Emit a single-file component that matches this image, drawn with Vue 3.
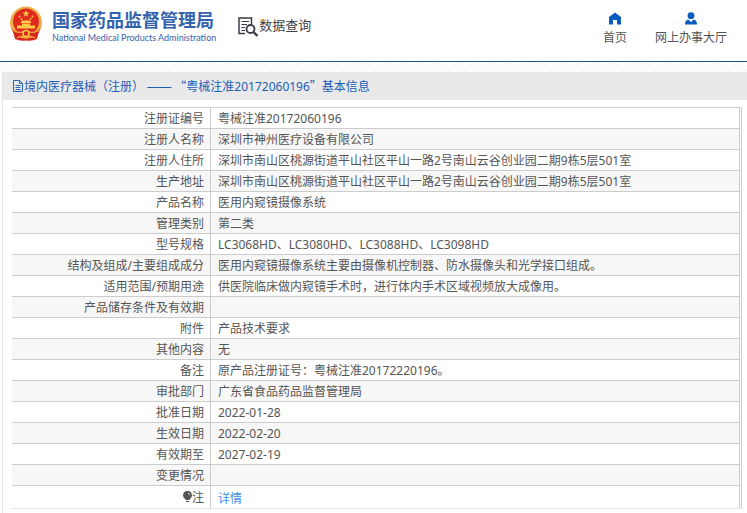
<script setup>
const rows = [
  ['注册证编号', '粤械注准20172060196'],
  ['注册人名称', '深圳市神州医疗设备有限公司'],
  ['注册人住所', '深圳市南山区桃源街道平山社区平山一路2号南山云谷创业园二期9栋5层501室'],
  ['生产地址', '深圳市南山区桃源街道平山社区平山一路2号南山云谷创业园二期9栋5层501室'],
  ['产品名称', '医用内窥镜摄像系统'],
  ['管理类别', '第二类'],
  ['型号规格', 'LC3068HD、LC3080HD、LC3088HD、LC3098HD'],
  ['结构及组成/主要组成成分', '医用内窥镜摄像系统主要由摄像机控制器、防水摄像头和光学接口组成。'],
  ['适用范围/预期用途', '供医院临床做内窥镜手术时，进行体内手术区域视频放大成像用。'],
  ['产品储存条件及有效期', ''],
  ['附件', '产品技术要求'],
  ['其他内容', '无'],
  ['备注', '原产品注册证号：粤械注准20172220196。'],
  ['审批部门', '广东省食品药品监督管理局'],
  ['批准日期', '2022-01-28'],
  ['生效日期', '2022-02-20'],
  ['有效期至', '2027-02-19'],
  ['变更情况', ''],
]
</script>

<template>
  <div class="page">
    <header class="top">
      <a class="brand" href="#">
        <svg class="emblem" viewBox="0 0 34 36" aria-hidden="true">
          <path d="M5 24 H29 L28 33 Q23 35.500 17 34.500 Q11 35.500 6 33 Z" fill="#d7261e" />
          <circle cx="17" cy="16.500" r="16" fill="#eeb04a" />
          <circle cx="17" cy="15.500" r="13" fill="#de2a1c" />
          <path d="M17 4 L17.900 6.600 L20.600 6.600 L18.400 8.200 L19.200 10.800 L17 9.200 L14.800 10.800 L15.600 8.200 L13.400 6.600 L16.100 6.600 Z" fill="#ffc84a" />
          <g fill="#ffc84a">
            <circle cx="10.500" cy="10.500" r=".9" /><circle cx="12.500" cy="13" r=".9" />
            <circle cx="21.500" cy="13" r=".9" /><circle cx="23.500" cy="10.500" r=".9" />
            <path d="M13 14.500 H21 L22.500 17 H11.500 Z M13 17.500 H21 V19.500 H26 V22.500 H8 V19.500 H13 Z" />
          </g>
          <path d="M3 23 Q10 27 17 24 Q24 27 31 23 L28 32 Q22 29 17 32 Q12 29 6 32 Z" fill="#d7261e" />
          <path d="M4 24 Q10 28 14 25.500 M30 24 Q24 28 20 25.500 M8 32 Q13 28.500 17 32 Q21 28.500 26 32" fill="none" stroke="#f2b33a" stroke-width="1.200" />
          <circle cx="17" cy="27.500" r="3" fill="#d7261e" stroke="#ffc84a" stroke-width="1.600" />
        </svg>
        <span class="names">
          <span class="cn">国家药品监督管理局</span>
          <span class="en">National Medical Products Administration</span>
        </span>
      </a>
      <a class="search" href="#">
        <svg class="search-icon" viewBox="0 0 21 20" fill="none" stroke="#3b3b46" aria-hidden="true">
          <path d="M7 16.500 H1 V1 H13.500 V7" stroke-width="1.500" />
          <path d="M3.500 4.500 H11 M3.500 7.500 H9 M3.500 10.500 H7 M3.500 13.500 H7" stroke-width="1.200" />
          <circle cx="12.500" cy="12" r="4" stroke-width="1.800" />
          <path d="M15.500 15 L19.500 19" stroke-width="2.400" />
        </svg>
        <span>数据查询</span>
      </a>
      <nav class="nav">
        <a href="#">
          <svg viewBox="0 0 14 13" aria-hidden="true"><path d="M7 .5 L13 5 V12.500 H9 V8 H5 V12.500 H1 V5 Z" fill="#0b5cc0" /></svg>
          <span>首页</span>
        </a>
        <a href="#">
          <svg viewBox="0 0 14 13" aria-hidden="true"><circle cx="7" cy="3.700" r="3.400" fill="#0b5cc0" /><path d="M1 12.500 Q1 8 4.500 7.500 L7 10 L9.500 7.500 Q13 8 13 12.500 Z" fill="#0b5cc0" /></svg>
          <span>网上办事大厅</span>
        </a>
      </nav>
    </header>
    <div class="strip"></div>
    <main class="panel">
      <h1 class="title">
        <svg viewBox="0 0 12 12" fill="none" stroke="#2a66b8" aria-hidden="true"><path d="M1.500 .5 H7.500 L10.500 3.500 V11.500 H1.500 Z M7.500 .5 V3.500 H10.500 M3.500 5.500 H8.500 M3.500 7.500 H8.500 M3.500 9.500 H8.500" /></svg>
        <span>境内医疗器械<span lang="zh-TW" class="paren">（</span>注册<span lang="zh-TW" class="paren">）</span> <span class="dash">——</span> <span class="wide">“</span>粤械注准20172060196<span class="wide">”</span>基本信息</span>
      </h1>
      <div class="frame">
        <table>
          <tbody>
            <tr v-for="[label, value] in rows" :key="label">
              <th scope="row">{{ label }}</th>
              <td>{{ value }}</td>
            </tr>
            <tr class="note">
              <th scope="row">
                <svg class="bulb" viewBox="0 0 9 12" aria-hidden="true"><path d="M4.500 0 A4.200 4.200 0 0 1 6.500 8 V9 H2.500 V8 A4.200 4.200 0 0 1 4.500 0 Z M3 10 H6 V11 H3 Z" fill="#555" /><path d="M5 2 Q6.500 2.500 6.800 4" stroke="#fff" stroke-width=".8" fill="none" /></svg>注
              </th>
              <td><a href="#">详情</a></td>
            </tr>
          </tbody>
        </table>
      </div>
    </main>
  </div>
</template>

<style>
body {
  margin: 0;
  background: #fff;
}
</style>

<style scoped>
.page {
  font-family: "Noto Sans", "Noto Sans CJK SC", sans-serif;
  font-size: 12px;
  color: #555;
}
a {
  text-decoration: none;
}
.top {
  display: flex;
  align-items: flex-start;
  height: 61px;
  padding: 0 20px 0 9px;
  border-bottom: 1px solid #1c5684;
}
.brand {
  display: flex;
  gap: 9px;
  padding-top: 6px;
  color: #3463ad;
}
.emblem {
  width: 34px;
  height: 36px;
}
.names {
  display: flex;
  flex-direction: column;
  padding-top: 3px;
  white-space: nowrap;
}
.cn {
  font-size: 18px;
  line-height: 22px;
  font-weight: 700;
}
.en {
  font-family: Lato, sans-serif;
  font-size: 9px;
  line-height: 13px;
}
.search {
  display: flex;
  padding-top: 15px;
  margin-left: 22px;
  font-size: 13px;
  line-height: 20px;
  color: #3f3f46;
  white-space: nowrap;
}
.search-icon {
  width: 21px;
  height: 20px;
  margin-top: 2px;
}
.nav {
  display: flex;
  gap: 28px;
  margin-left: auto;
  padding-top: 12px;
}
.nav a {
  display: flex;
  flex-direction: column;
  align-items: center;
  gap: 4px;
  line-height: 18px;
  color: #555;
  white-space: nowrap;
}
.nav svg {
  width: 14px;
  height: 13px;
}
.strip {
  height: 10px;
  background: repeating-linear-gradient(135deg, #fff 0 2px, #f6f6f6 2px 3px);
}
.panel {
  margin-left: 2px;
  border-left: 1px solid #e4e4e4;
  padding-bottom: 4px;
}
.title {
  display: flex;
  align-items: center;
  height: 28px;
  margin: 0;
  padding: 0 9px;
  background: #e9e9e9;
  font-size: 12px;
  line-height: 20px;
  font-weight: 400;
  color: #1a5fb8;
  white-space: nowrap;
}
.title svg {
  width: 12px;
  height: 12px;
}
.paren {
  font-family: "Noto Sans CJK TC", sans-serif;
}
.dash {
  font-family: "Liberation Sans", sans-serif;
}
.wide {
  font-family: "Noto Sans CJK SC", sans-serif;
}
.frame {
  margin: 7px 5px 0 9px;
  padding-right: 1px;
  border-right: 1px solid #ccc;
}
table {
  width: 100%;
  border-collapse: collapse;
  border-top: 1px solid #ccc;
  border-right: 1px solid #ccc;
}
th,
td {
  padding: 2px 6px 0;
  border-bottom: 1px solid #ccc;
  line-height: 18px;
  font-weight: 400;
}
td {
  height: 18px;
  padding-left: 7px;
  text-align: left;
}
th {
  width: 186px;
  text-align: right;
  border-right: 1px solid #ccc;
}
tr:nth-child(even) {
  background: #f7f7f7;
}
.note th,
.note td {
  border-bottom-color: #e4e4e4;
}
.note td {
  padding-top: 4px;
}
.note a {
  color: #3a8ee6;
}
.bulb {
  width: 9px;
  height: 12px;
  vertical-align: -1px;
}
</style>
